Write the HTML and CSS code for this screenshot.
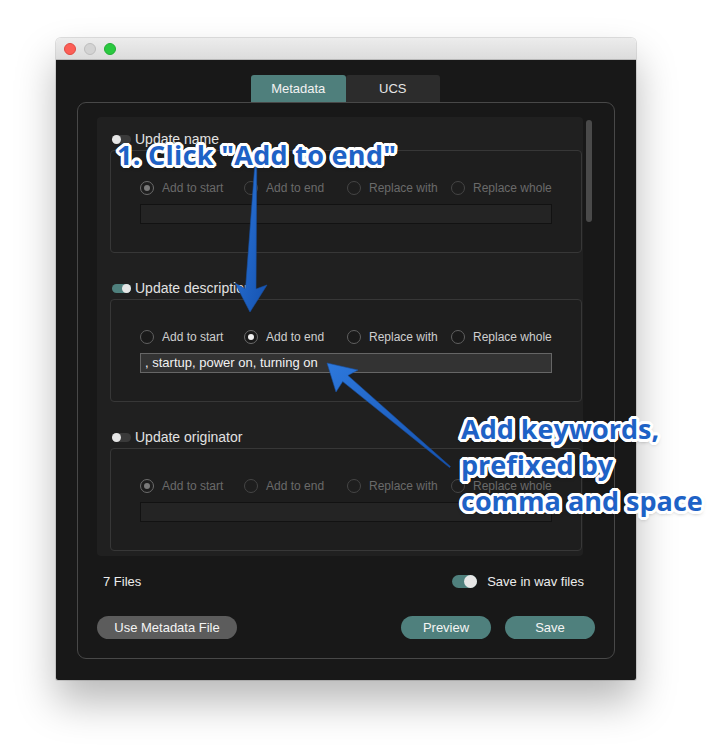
FILE: index.html
```html
<!DOCTYPE html>
<html>
<head>
<meta charset="utf-8">
<link rel="stylesheet" href="styles.css">
</head>
<body>
<div class="window">
  <div class="titlebar">
    <span class="light red"></span>
    <span class="light gray"></span>
    <span class="light green"></span>
  </div>
  <div class="win-body">
    <div class="tabs">
      <div class="tab active">Metadata</div>
      <div class="tab">UCS</div>
    </div>
    <div class="panel">
      <div class="scroll-row">
        <div class="scroll-area">
          <div class="section">
            <div class="sec-head"><span class="toggle small"></span><span class="sec-label">Update name</span></div>
            <div class="sec-box disabled">
              <div class="radios">
                <div class="radio checked"><span class="circle"></span><span>Add to start</span></div>
                <div class="radio"><span class="circle"></span><span>Add to end</span></div>
                <div class="radio"><span class="circle"></span><span>Replace with</span></div>
                <div class="radio"><span class="circle"></span><span>Replace whole</span></div>
              </div>
              <div class="field"></div>
            </div>
          </div>
          <div class="section">
            <div class="sec-head"><span class="toggle small on"></span><span class="sec-label">Update description</span></div>
            <div class="sec-box">
              <div class="radios">
                <div class="radio"><span class="circle"></span><span>Add to start</span></div>
                <div class="radio checked"><span class="circle"></span><span>Add to end</span></div>
                <div class="radio"><span class="circle"></span><span>Replace with</span></div>
                <div class="radio"><span class="circle"></span><span>Replace whole</span></div>
              </div>
              <div class="field">, startup, power on, turning on</div>
            </div>
          </div>
          <div class="section">
            <div class="sec-head"><span class="toggle small"></span><span class="sec-label">Update originator</span></div>
            <div class="sec-box disabled">
              <div class="radios">
                <div class="radio checked"><span class="circle"></span><span>Add to start</span></div>
                <div class="radio"><span class="circle"></span><span>Add to end</span></div>
                <div class="radio"><span class="circle"></span><span>Replace with</span></div>
                <div class="radio"><span class="circle"></span><span>Replace whole</span></div>
              </div>
              <div class="field"></div>
            </div>
          </div>
        </div>
        <div class="scrollbar"><div class="thumb"></div></div>
      </div>
      <div class="status-row">
        <span>7 Files</span>
        <span class="save-wav"><span class="toggle big on"></span><span>Save in wav files</span></span>
      </div>
      <div class="button-row">
        <div class="btn grey">Use Metadata File</div>
        <div class="btn-group">
          <div class="btn teal">Preview</div>
          <div class="btn teal">Save</div>
        </div>
      </div>
    </div>
  </div>
</div>

<div class="overlay">
  <svg class="arrows" width="711" height="754" viewBox="0 0 711 754">
    <defs>
      <linearGradient id="ag" x1="0" y1="0" x2="1" y2="1">
        <stop offset="0" stop-color="#2d78dc"/>
        <stop offset="1" stop-color="#1552b0"/>
      </linearGradient>
    </defs>
    <polygon points="256.8,160 256,289 267,285 250,312 235,283 245.5,289 255.2,160" fill="url(#ag)" stroke="#174f9f" stroke-width="0.6" stroke-linejoin="round"/>
    <polygon points="450.4,466.5 347.9,375.4 358,370 327,363 336,392 342.7,381.6 449.6,467.5" fill="url(#ag)" stroke="#174f9f" stroke-width="0.6" stroke-linejoin="round"/>
  </svg>
  <div class="note note1">1. Click "Add to end"</div>
  <div class="note note2">Add keywords,<br>prefixed by<br>comma and space</div>
</div>
</body>
</html>
```

FILE: styles.css
```css
html, body {
  margin: 0;
  padding: 0;
}
body {
  width: 711px;
  height: 754px;
  background: #ffffff;
  font-family: "Liberation Sans", Arial, sans-serif;
  position: relative;
  overflow: hidden;
}
.window {
  margin: 38px 0 0 56px;
  width: 580px;
  height: 642px;
  border-radius: 5px 5px 2px 2px;
  overflow: hidden;
  display: flex;
  flex-direction: column;
  box-shadow: 0 22px 40px rgba(0,0,0,0.28), 0 0 0 1px rgba(0,0,0,0.12);
}
.titlebar {
  height: 22px;
  flex: none;
  box-sizing: border-box;
  background: linear-gradient(#ececec, #dcdcdc);
  border-bottom: 1px solid #b8b8b8;
  display: flex;
  align-items: center;
  padding-left: 8px;
  gap: 8px;
}
.light {
  width: 12px;
  height: 12px;
  border-radius: 50%;
  box-sizing: border-box;
}
.light.red { background: #fc5f57; border: 1px solid #de4a42; }
.light.gray { background: #d3d3d3; border: 1px solid #bdbdbd; }
.light.green { background: #2ac940; border: 1px solid #22ad35; }

.win-body {
  flex: 1;
  background: #181818;
  padding: 15px 21px 21px;
  display: flex;
  flex-direction: column;
}
.tabs {
  align-self: center;
  display: flex;
  height: 27px;
  flex: none;
  margin-left: -1px;
}
.tab {
  width: 94.5px;
  display: flex;
  align-items: center;
  justify-content: center;
  background: #2c2c2c;
  color: #e6e6e6;
  font-size: 13px;
  border-radius: 3px 3px 0 0;
}
.tab.active {
  background: #4f7f7c;
  color: #f2f2f2;
}
.panel {
  flex: 1;
  border: 1px solid #484848;
  border-radius: 9px;
  padding: 14px 19px 19px 19px;
  display: flex;
  flex-direction: column;
}
.scroll-row {
  height: 439px;
  display: flex;
  flex: none;
}
.scroll-area {
  flex: 1;
  background: #202020;
  border-radius: 4px;
  padding: 14px 1px 0 13px;
  overflow: hidden;
  display: flex;
  flex-direction: column;
  gap: 27px;
}
.scrollbar {
  width: 6px;
  margin: 0 3px 0 3px;
  position: relative;
}
.thumb {
  position: absolute;
  top: 3px;
  left: 0;
  width: 6px;
  height: 102px;
  border-radius: 3px;
  background: #4a4a4a;
}
.section {
  display: flex;
  flex-direction: column;
  flex: none;
}
.sec-head {
  height: 16px;
  display: flex;
  align-items: center;
  gap: 4px;
  padding-left: 2px;
  margin-bottom: 3px;
}
.sec-label {
  color: #e2e2e2;
  font-size: 14px;
}
.toggle {
  position: relative;
  display: inline-block;
  flex: none;
  background: #3a3a3a;
}
.toggle::after {
  content: "";
  position: absolute;
  top: 0;
  left: 0;
  border-radius: 50%;
  background: #e6e6e6;
}
.toggle.small {
  width: 19px;
  height: 9px;
  border-radius: 5px;
}
.toggle.small::after {
  width: 9px;
  height: 9px;
}
.toggle.on { background: #4f807d; }
.toggle.small.on::after { left: 10px; }
.toggle.big {
  width: 25px;
  height: 13px;
  border-radius: 7px;
}
.toggle.big::after {
  width: 13px;
  height: 13px;
}
.toggle.big.on::after { left: 12px; }

.sec-box {
  height: 103px;
  box-sizing: border-box;
  border: 1px solid #373737;
  border-radius: 4px;
  background: #1e1e1e;
  padding: 30px 29px 28px;
  display: flex;
  flex-direction: column;
  gap: 9px;
}
.radios {
  height: 14px;
  display: grid;
  grid-template-columns: 104px 103px 104px 1fr;
}
.radio {
  display: flex;
  align-items: center;
  gap: 8px;
  font-size: 12px;
  color: #cfcfcf;
  white-space: nowrap;
}
.circle {
  width: 14px;
  height: 14px;
  box-sizing: border-box;
  border-radius: 50%;
  border: 1.5px solid #606060;
  background: #1a1a1a;
  flex: none;
  position: relative;
}
.radio.checked .circle::after {
  content: "";
  position: absolute;
  left: 50%;
  top: 50%;
  width: 6px;
  height: 6px;
  margin: -3px 0 0 -3px;
  border-radius: 50%;
  background: #f0f0f0;
}
.radio.checked .circle { border-color: #6c6c6c; }
.disabled .radio { color: #6a6a6a; }
.disabled .circle { border-color: #454545; background: #1e1e1e; }
.disabled .radio.checked .circle::after { background: #7a7a7a; }

.field {
  height: 20px;
  box-sizing: border-box;
  border: 1px solid #666;
  background: #333333;
  color: #f2f2f2;
  font-size: 13px;
  line-height: 18px;
  padding-left: 4px;
}
.disabled .field {
  border-color: #121212;
  background: #242424;
}

.status-row {
  margin-top: 17px;
  height: 16px;
  display: flex;
  align-items: center;
  justify-content: space-between;
  padding: 0 11px 0 6px;
  font-size: 13px;
  color: #ececec;
}
.save-wav {
  display: flex;
  align-items: center;
  gap: 10px;
}
.button-row {
  margin-top: 27px;
  height: 23px;
  display: flex;
  justify-content: space-between;
}
.btn-group {
  display: flex;
  gap: 14px;
}
.btn {
  height: 23px;
  border-radius: 12px;
  display: flex;
  align-items: center;
  justify-content: center;
  font-size: 13px;
  color: #f4f4f4;
}
.btn.grey {
  width: 140px;
  background: #5c5c5c;
}
.btn.teal {
  width: 90px;
  background: #4f807d;
}

.overlay {
  position: absolute;
  inset: 0;
  pointer-events: none;
}
.arrows {
  position: absolute;
  left: 0;
  top: 0;
}
.note {
  position: absolute;
  font-family: "Open Sans", "Noto Sans", sans-serif;
  font-weight: 700;
  font-size: 27px;
  line-height: 36px;
  color: #1e62c6;
  white-space: nowrap;
  text-shadow:
    2px 0 0 #fff, -2px 0 0 #fff, 0 2px 0 #fff, 0 -2px 0 #fff,
    2px 2px 0 #fff, -2px -2px 0 #fff, 2px -2px 0 #fff, -2px 2px 0 #fff,
    3px 0 0 #fff, -3px 0 0 #fff, 0 3px 0 #fff, 0 -3px 0 #fff,
    3px 1px 0 #fff, -3px 1px 0 #fff, 1px 3px 0 #fff, 1px -3px 0 #fff,
    3px -1px 0 #fff, -3px -1px 0 #fff, -1px 3px 0 #fff, -1px -3px 0 #fff,
    0 2px 4px rgba(0,0,0,0.5);
}
.note1 {
  left: 117px;
  top: 137px;
  letter-spacing: 0.3px;
}
.note2 {
  left: 461px;
  top: 411px;
}
```
